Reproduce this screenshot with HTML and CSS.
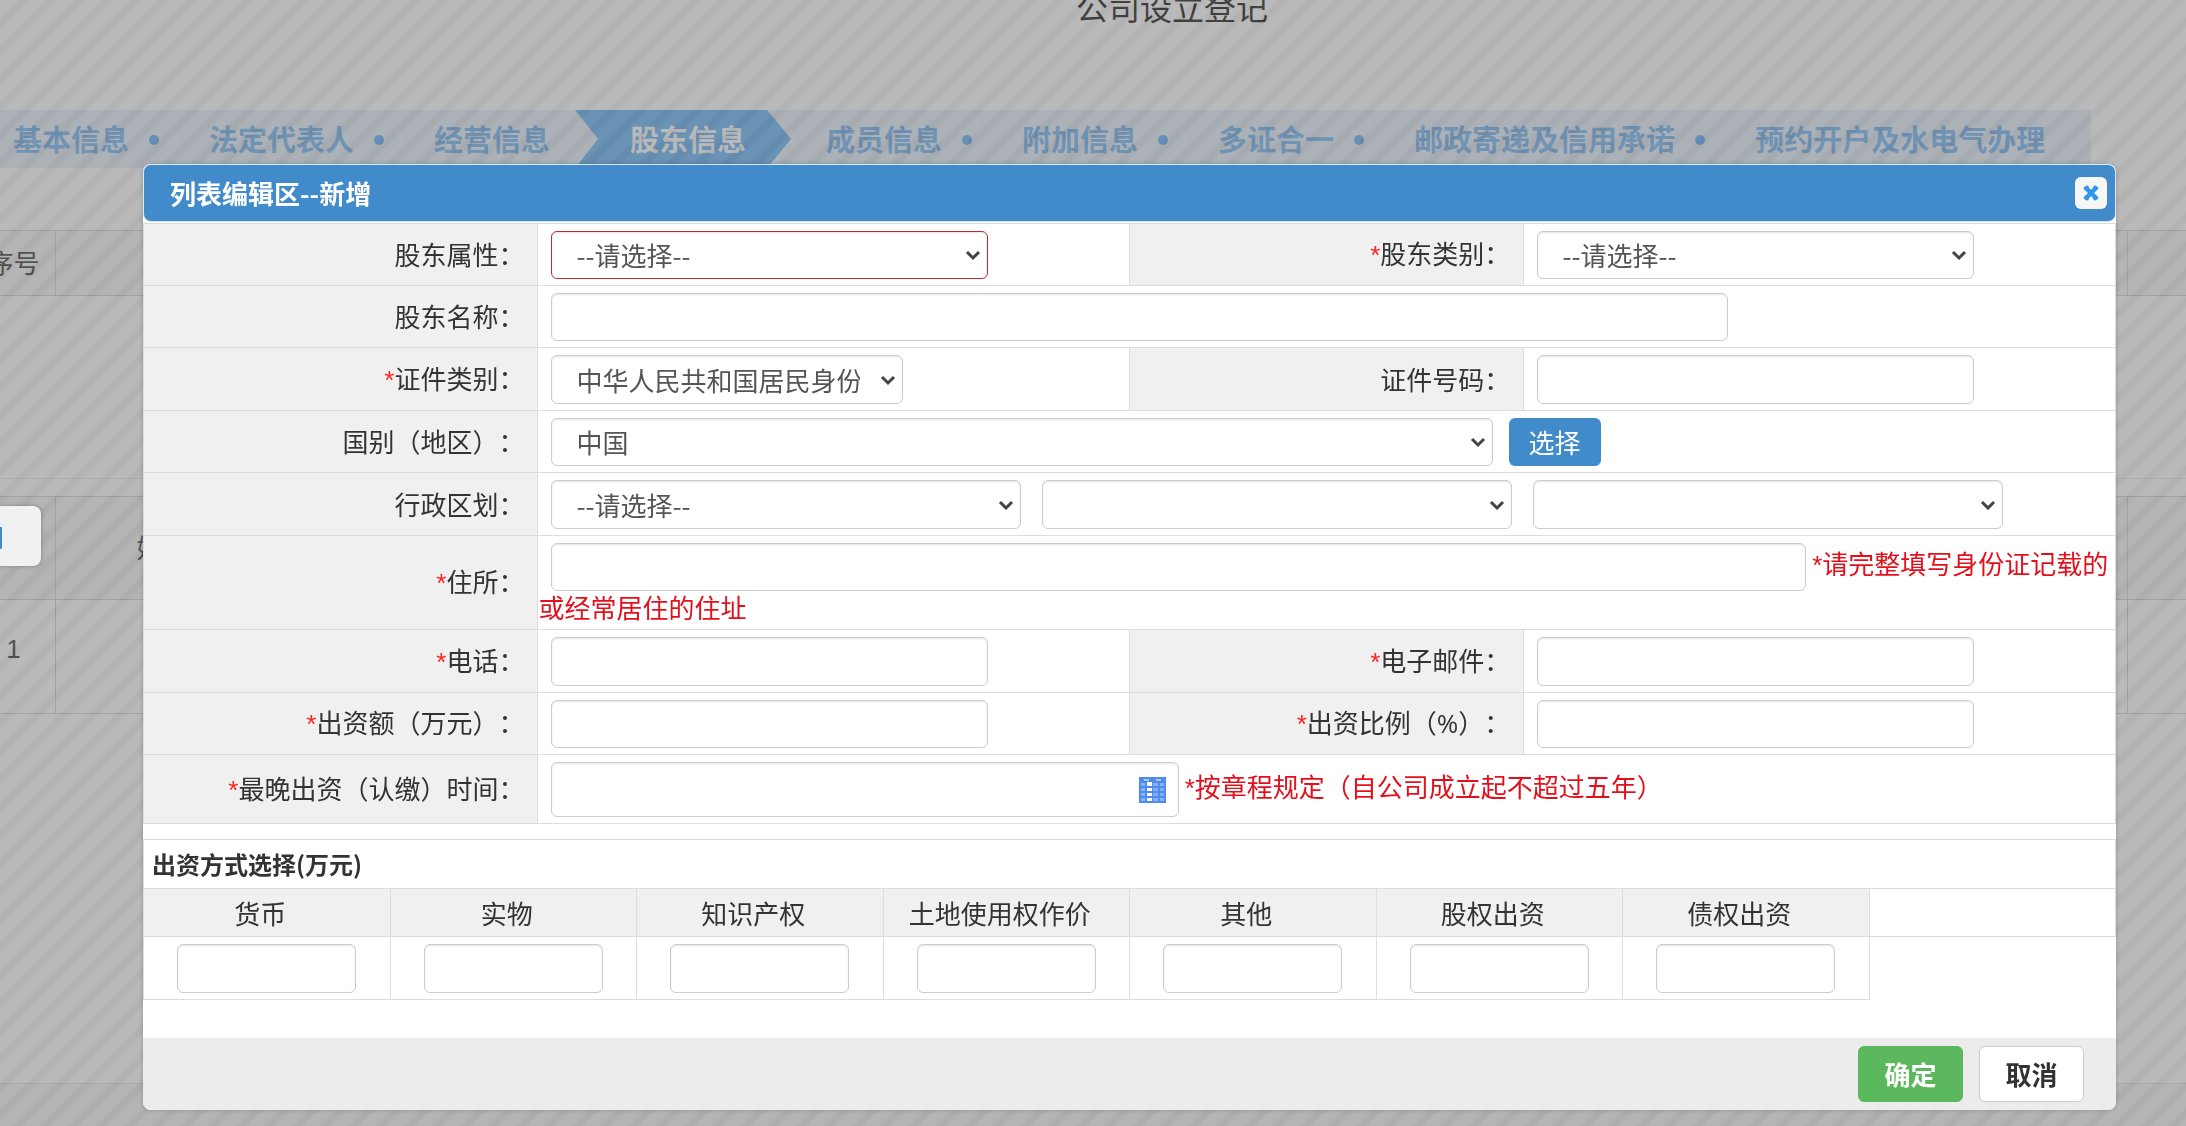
FILE: index.html
```
<!DOCTYPE html>
<html lang="zh-CN">
<head>
<meta charset="utf-8">
<meta name="viewport" content="width=device-width, initial-scale=1">
<title>公司设立登记</title>
<link rel="stylesheet" href="styles.css">
</head>
<body>
<main class="page">
  <h1 class="page-title">公司设立登记</h1>
  <nav class="steps" aria-label="登记步骤">
    <a class="step" href="#s1">基本信息</a>
    <a class="step" href="#s2">法定代表人</a>
    <a class="step no-dot" href="#s3">经营信息</a>
    <a class="step active" href="#s4" aria-current="step">股东信息</a>
    <a class="step" href="#s5">成员信息</a>
    <a class="step" href="#s6">附加信息</a>
    <a class="step" href="#s7">多证合一</a>
    <a class="step" href="#s8">邮政寄递及信用承诺</a>
    <a class="step no-dot" href="#s9">预约开户及水电气办理</a>
  </nav>
  <table class="list list-first">
    <colgroup><col class="c-no"><col class="c-name"><col><col class="c-end"></colgroup>
    <tbody><tr class="head"><th>序号</th><th></th><th></th><th></th></tr></tbody>
  </table>
  <div class="list-wrap">
    <table class="list list-second">
      <colgroup><col class="c-no"><col class="c-name"><col><col class="c-end"></colgroup>
      <tbody>
        <tr class="head"><th></th><th>姓名</th><th></th><th></th></tr>
        <tr><td>1</td><td></td><td></td><td></td></tr>
      </tbody>
    </table>
  </div>
  <div class="page-foot"></div>
</main>

<div class="backdrop">
  <button class="add" type="button">添加</button>
  <form class="modal" role="dialog" aria-labelledby="dlg-title">
    <header class="modal-head">
      <h2 id="dlg-title" class="modal-title">列表编辑区--新增</h2>
      <button class="close" type="button" aria-label="关闭">
        <svg width="18" height="18" viewBox="0 0 16 16" aria-hidden="true"><path d="M4 4l8 8M12 4l-8 8" stroke="#2f95ee" stroke-width="4" stroke-linecap="round"/><path d="M3 3.800l1.600 -.8M13 3.800l-1.600 -.8M3 12.200l1.600 .8M13 12.200l-1.600 .8" stroke="#2f95ee" stroke-width="3" stroke-linecap="round"/></svg>
      </button>
    </header>

    <table class="form">
      <colgroup><col class="w20"><col class="w30"><col class="w20"><col class="w30"></colgroup>
      <tbody>
        <tr>
          <th><label for="attr">股东属性：</label></th>
          <td><select id="attr" class="ctl half error"><option>--请选择--</option></select></td>
          <th><label for="kind"><i>*</i>股东类别：</label></th>
          <td><select id="kind" class="ctl half"><option>--请选择--</option></select></td>
        </tr>
        <tr>
          <th><label for="name">股东名称：</label></th>
          <td colspan="3"><input id="name" class="ctl name" type="text"></td>
        </tr>
        <tr class="tall">
          <th><label for="idtype"><i>*</i>证件类别：</label></th>
          <td><select id="idtype" class="ctl idtype"><option>中华人民共和国居民身份证</option></select></td>
          <th><label for="idno">证件号码：</label></th>
          <td><input id="idno" class="ctl half" type="text"></td>
        </tr>
        <tr>
          <th><label for="country">国别（地区）：</label></th>
          <td colspan="3"><div class="line"><select id="country" class="ctl country"><option>中国</option></select><button class="pick" type="button">选择</button></div></td>
        </tr>
        <tr class="tall">
          <th><label for="prov">行政区划：</label></th>
          <td colspan="3"><div class="line regions">
            <select id="prov" class="ctl region"><option>--请选择--</option></select>
            <select class="ctl region" aria-label="市"><option></option></select>
            <select class="ctl region" aria-label="区县"><option></option></select>
          </div></td>
        </tr>
        <tr>
          <th><label for="addr"><i>*</i>住所：</label></th>
          <td colspan="3"><input id="addr" class="ctl addr" type="text"> <span class="note"><i>*</i>请完整填写身份证记载的或经常居住的住址</span></td>
        </tr>
        <tr class="tall">
          <th><label for="tel"><i>*</i>电话：</label></th>
          <td><input id="tel" class="ctl half" type="tel"></td>
          <th><label for="mail"><i>*</i>电子邮件：</label></th>
          <td><input id="mail" class="ctl half" type="email"></td>
        </tr>
        <tr>
          <th><label for="amount"><i>*</i>出资额（万元）：</label></th>
          <td><input id="amount" class="ctl half" type="text"></td>
          <th><label for="ratio"><i>*</i>出资比例（<span class="latin">%</span>）：</label></th>
          <td><input id="ratio" class="ctl half" type="text"></td>
        </tr>
        <tr>
          <th><label for="date"><i>*</i>最晚出资（认缴）时间：</label></th>
          <td colspan="3"><input id="date" class="ctl date" type="text"> <span class="note"><i>*</i>按章程规定（自公司成立起不超过五年）</span></td>
        </tr>
      </tbody>
    </table>

    <table class="ways">
      <caption>出资方式选择(万元)</caption>
      <thead>
        <tr><th id="w1">货币</th><th id="w2">实物</th><th id="w3">知识产权</th><th id="w4">土地使用权作价</th><th id="w5">其他</th><th id="w6">股权出资</th><th id="w7">债权出资</th><td rowspan="2"></td></tr>
      </thead>
      <tbody>
        <tr>
          <td><input class="ctl way" type="text" aria-labelledby="w1"></td>
          <td><input class="ctl way" type="text" aria-labelledby="w2"></td>
          <td><input class="ctl way" type="text" aria-labelledby="w3"></td>
          <td><input class="ctl way" type="text" aria-labelledby="w4"></td>
          <td><input class="ctl way" type="text" aria-labelledby="w5"></td>
          <td><input class="ctl way" type="text" aria-labelledby="w6"></td>
          <td><input class="ctl way" type="text" aria-labelledby="w7"></td>
          <td class="blank"></td>
        </tr>
      </tbody>
    </table>

    <footer class="modal-foot">
      <button class="btn ok" type="submit">确定</button>
      <button class="btn cancel" type="button">取消</button>
    </footer>
  </form>
</div>
</body>
</html>
```
FILE: styles.css
```
* { box-sizing: border-box; }

body {
  margin: 0;
  overflow: hidden;
  background: #fff;
  color: #333;
  font: 26px/32px "Noto Sans CJK SC", "Noto Sans", sans-serif;
  text-spacing-trim: space-all;
}

button, input, select { font: inherit; color: inherit; }

/* ---------- page behind the dialog ---------- */
.page {
  display: flex;
  flex-direction: column;
  height: 100vh;
}

.page-title {
  margin: -10px 0 88px 158px;
  font-size: 32px;
  line-height: 32px;
  font-weight: 400;
  text-align: center;
  color: #111;
}

.steps {
  display: flex;
  align-self: flex-start;
  flex: none;
  margin-left: -42px;
  padding-right: 21px;
  background: #e3eef8;
}

.step {
  position: relative;
  flex: none;
  padding: 0 25px 2px 55px;
  font-size: 29px;
  line-height: 56px;
  font-weight: 700;
  color: #6db2f5;
  text-decoration: none;
  white-space: nowrap;
  background: url("data:image/svg+xml,%3Csvg xmlns='http://www.w3.org/2000/svg' width='24' height='58'%3E%3Cpath d='M0 0L23 29L0 58' fill='none' stroke='%23fff' stroke-opacity='.3' stroke-width='2'/%3E%3C/svg%3E") no-repeat left top;
}

.step::after {
  content: "";
  position: absolute;
  right: -5px;
  top: 25px;
  width: 10px;
  height: 10px;
  border-radius: 50%;
  background: #5aa9f5;
}

.step.no-dot::after { display: none; }

.step.active { z-index: 1; background: none; color: #fff; }

.step.active::after { display: none; }

.step.active::before {
  content: "";
  position: absolute;
  z-index: -1;
  inset: 0 -20px 0 0;
  background: #5fb0f5;
  clip-path: polygon(0 0, calc(100% - 24px) 0, 100% 50%, calc(100% - 24px) 100%, 0 100%, 23px 50%);
}

.list {
  width: calc(100% + 69px);
  margin-left: -29px;
  table-layout: fixed;
  border-collapse: collapse;
}

.list th, .list td {
  border: 1px solid #cecece;
  padding: 0 0 3px;
  font-weight: 400;
  text-align: center;
}

.list .head { background: #f4f4f4; }
.c-no { width: 84px; }
.c-name { width: 214px; }
.c-end { width: 98px; }
.list-first { margin-top: 62px; }
.list-first tr { height: 65px; }
.list-wrap {
  margin-top: 182px;
  border-top: 1px solid #ececec;
  padding-top: 17px;
}
.list-second .head { height: 103px; }
.list-second tr { height: 114px; }
.list-second td { padding: 0 0 16px; font-family: "Liberation Sans", sans-serif; }

.page-foot {
  flex: none;
  height: 43px;
  margin-top: auto;
  border-top: 1px solid #dce2df;
  background: #f2f7f4;
}

/* ---------- striped veil ---------- */
.backdrop {
  position: fixed;
  z-index: 10;
  inset: 0;
  display: flex;
  align-items: flex-start;
  padding: 164px 70px 0 143px;
  background: linear-gradient(135deg,
    rgba(117, 117, 117, .5) 0 26%, rgba(102, 102, 102, .5) 38% 46%,
    rgba(117, 117, 117, .5) 56% 76%, rgba(102, 102, 102, .5) 88% 96%, rgba(112, 112, 112, .5) 100%) 0 0 / 28px 28px;
}

.add {
  position: absolute;
  left: -85px;
  top: 506px;
  width: 126px;
  height: 60px;
  border: 0;
  border-radius: 8px;
  background: #f1f1f1;
  color: #428bca;
  font-weight: 700;
  box-shadow: 0 0 4px rgba(0, 0, 0, .3);
}

/* ---------- dialog ---------- */
.modal {
  flex: 1;
  min-width: 0;
  border-radius: 8px;
  background: #fff;
  overflow: hidden;
  box-shadow: 0 0 4px rgba(0, 0, 0, .2);
}

.modal-head {
  display: flex;
  align-items: center;
  justify-content: space-between;
  height: 58px;
  margin-bottom: 1px;
  padding: 0 8px 0 26px;
  border: 1px solid #d4ebf8;
  border-radius: 8px;
  background: #428bca;
  color: #fff;
}

.modal-title { margin: 0; font-size: 26px; line-height: 32px; }

.close {
  display: flex;
  align-items: center;
  justify-content: center;
  width: 32px;
  height: 32px;
  padding: 0;
  border: 0;
  border-radius: 6px;
  background: #f6f6f6;
}

.form, .ways {
  width: 100%;
  table-layout: fixed;
  border-collapse: collapse;
}

.w20 { width: 20%; }
.w30 { width: 30%; }

.form th, .form td { border: 1px solid #ddd; }

.form th {
  padding: 0 13px 1px 0;
  background: #f0f0f0;
  font-weight: 400;
  text-align: right;
}

.form i { font-family: "Liberation Sans", sans-serif; font-style: normal; color: #f22; }
.latin { font-family: "Open Sans", sans-serif; }

.form td { padding: 7px 0 6px; }

.ctl {
  height: 48px;
  margin: 0 0 0 13px;
  padding: 0 24px;
  border: 1px solid #ccc;
  border-radius: 6px;
  background: #fff;
  box-shadow: inset 0 1px 2px rgba(0, 0, 0, .1);
  color: #555;
  vertical-align: top;
}

.tall .ctl { height: 49px; }

select.ctl {
  appearance: none;
  padding-right: 42px;
  background: #fff url("data:image/svg+xml,%3Csvg xmlns='http://www.w3.org/2000/svg' width='16' height='12'%3E%3Cpath d='M2 3l6 6l6-6' fill='none' stroke='%23444' stroke-width='3'/%3E%3C/svg%3E") no-repeat right 6px center;
}

select.error { border-color: #c22c2c; }
.half { width: 74%; }
.name { width: 74.6%; }
.idtype { width: 59.6%; }
.country { width: 59.7%; }
.region { width: 29.8%; }
.addr { width: 79.6%; }

.date {
  width: 39.8%;
  height: 55px;
  vertical-align: middle;
  background: #fff url("data:image/svg+xml,%3Csvg xmlns='http://www.w3.org/2000/svg' width='27' height='26'%3E%3Cpath fill='%234f8af0' d='M0 0h27v26H0z'/%3E%3Cpath fill='%23a9c8fb' d='M5 2h5v2H5zM17 2h5v2h-5z'/%3E%3Cpath fill='%2385b2fa' d='M2 6h4v3H2zM14 6h5v3h-5zM21 6h4v3h-4zM2 11h4v3H2zM14 11h5v3h-5zM21 11h4v3h-4zM2 16h4v3H2zM14 16h5v3h-5zM21 16h4v3h-4zM2 21h4v3H2zM14 21h5v3h-5zM21 21h4v3h-4z'/%3E%3Cpath fill='%23fff' d='M8 5h5v4H8zM8 11h5v3H8zM8 16h5v3H8zM8 21h5v3H8z'/%3E%3C/svg%3E") no-repeat right 12px center;
}

.line { display: flex; gap: 16px; }
.regions { gap: 8px; }

.pick {
  width: 92px;
  height: 48px;
  padding: 0;
  border: 0;
  border-radius: 6px;
  background: #428bca;
  color: #fff;
}

.addr { vertical-align: middle; }
.note, .form .note i { color: #e3101c; }

.ways { margin-top: 15px; }

.ways caption {
  height: 49px;
  padding: 0 8px;
  border: 1px solid #ddd;
  border-bottom: 0;
  font-size: 24px;
  line-height: 48px;
  font-weight: 700;
  text-align: left;
}

.ways th, .ways td {
  border: 1px solid #ddd;
  padding: 0;
  text-align: center;
}

.ways th {
  height: 48px;
  padding: 0 13px 0 0;
  background: #f0f0f0;
  font-weight: 400;
}
.ways tbody td { padding: 7px 0 6px; }
.ways .blank { display: none; }
.way { width: 73%; height: 49px; margin: 0; }

.modal-foot {
  display: flex;
  justify-content: flex-end;
  gap: 16px;
  margin-top: 38px;
  padding: 8px 32px;
  background: #ececec;
}

.btn {
  width: 105px;
  height: 56px;
  padding: 0;
  border: 1px solid #ccc;
  border-radius: 6px;
  background: #fff;
  font-weight: 700;
}

.ok { border-color: #5cb85c; background: #5cb85c; color: #fff; }
```
